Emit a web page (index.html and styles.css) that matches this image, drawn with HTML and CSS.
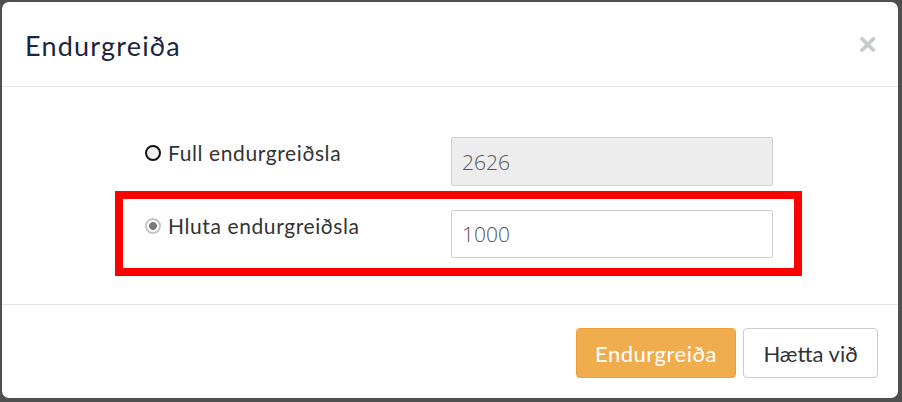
FILE: index.html
```html
<!DOCTYPE html>
<html lang="is">
<head>
<meta charset="utf-8">
<title>Endurgreiða</title>
<link rel="stylesheet" href="styles.css">
</head>
<body>
<div class="modal">
  <div class="modal-header">
    <h4 class="modal-title">Endurgreiða</h4>
    <span class="close">×</span>
  </div>
  <div class="modal-body">
    <div class="row row-full">
      <label class="choice"><span class="radio radio-off"></span>Full endurgreiðsla</label>
      <div class="input input-disabled">2626</div>
    </div>
    <div class="row row-part">
      <label class="choice"><span class="radio radio-on"></span>Hluta endurgreiðsla</label>
      <div class="input">1000</div>
    </div>
  </div>
  <div class="modal-footer">
    <button class="btn btn-warning">Endurgreiða</button>
    <button class="btn btn-default">Hætta við</button>
  </div>
</div>
</body>
</html>
```
FILE: styles.css
```css
html, body {
  margin: 0;
  padding: 0;
  background: #4f4f4f;
  width: 902px;
  height: 402px;
  overflow: hidden;
}
body {
  padding: 2px 0 0 2px;
  box-sizing: border-box;
  font-family: Lato, "Noto Sans", sans-serif;
}
.modal {
  width: 896px;
  height: 396px;
  background: #fff;
  border-radius: 7px;
  display: flex;
  flex-direction: column;
  overflow: hidden;
}
.modal-header {
  height: 84px;
  border-bottom: 1px solid #e5e5e5;
  display: flex;
  align-items: center;
  justify-content: space-between;
  padding: 0 21px 0 23px;
  flex: none;
}
.modal-title {
  margin: 0;
  font-weight: 400;
  font-size: 27px;
  letter-spacing: 1.2px;
  color: #1b2442;
  padding-top: 3px;
}
.close {
  font-family: "Liberation Sans", Arial, sans-serif;
  font-weight: 700;
  font-size: 32px;
  color: #c9c9c9;
  line-height: 1;
  margin-top: 0;
}
.modal-body {
  flex: 1;
  padding-top: 50px;
  box-sizing: border-box;
  border-bottom: 1px solid #e5e5e5;
}
.row {
  display: flex;
  align-items: flex-start;
}
.row-full {
  margin-left: 143px;
  height: 54px;
}
.row-part {
  margin-left: 113px;
  width: 687px;
  box-sizing: border-box;
  border: 8px solid #ff0000;
  padding: 11px 20px 10px 22px;
}
.choice {
  width: 306px;
  display: flex;
  align-items: center;
  font-family: Lato, "Noto Sans", sans-serif;
  font-size: 21px;
  letter-spacing: 0.6px;
  color: #333;
  margin-top: 4px;
  line-height: 24px;
}
.radio {
  width: 16px;
  height: 16px;
  box-sizing: border-box;
  border-radius: 50%;
  margin-right: 7px;
  display: inline-block;
  flex: none;
}
.radio-off {
  border: 2px solid #111;
  background: #f0f0f0;
}
.radio-on {
  border: 2.5px solid #c6c6c6;
  background: radial-gradient(circle, #7a7a7a 0 3.6px, #fff 4.2px);
}
.input {
  width: 322px;
  height: 49px;
  box-sizing: border-box;
  border: 1px solid #cfcfcf;
  border-radius: 2px;
  padding: 0 10px;
  display: flex;
  align-items: center;
  font-family: "Open Sans", sans-serif;
  font-size: 21px;
  font-weight: 300;
  color: #555;
  background: #fff;
}
.row-part .input {
  height: 48px;
}
.input-disabled {
  background: #ededed;
}
.modal-footer {
  height: 93px;
  box-sizing: border-box;
  display: flex;
  justify-content: flex-end;
  align-items: flex-start;
  padding: 23px 20px 0 0;
  gap: 7px;
  flex: none;
}
.btn {
  height: 50px;
  border-radius: 4px;
  font-family: Lato, "Noto Sans", sans-serif;
  font-size: 22px;
  padding: 0;
  box-sizing: border-box;
  cursor: pointer;
}
.btn-warning {
  width: 160px;
  background: #f0ad4e;
  border: 1px solid #eea236;
  color: #fff;
  letter-spacing: 0.5px;
}
.btn-default {
  width: 135px;
  background: #fff;
  border: 1px solid #ccc;
  color: #333;
}
```
